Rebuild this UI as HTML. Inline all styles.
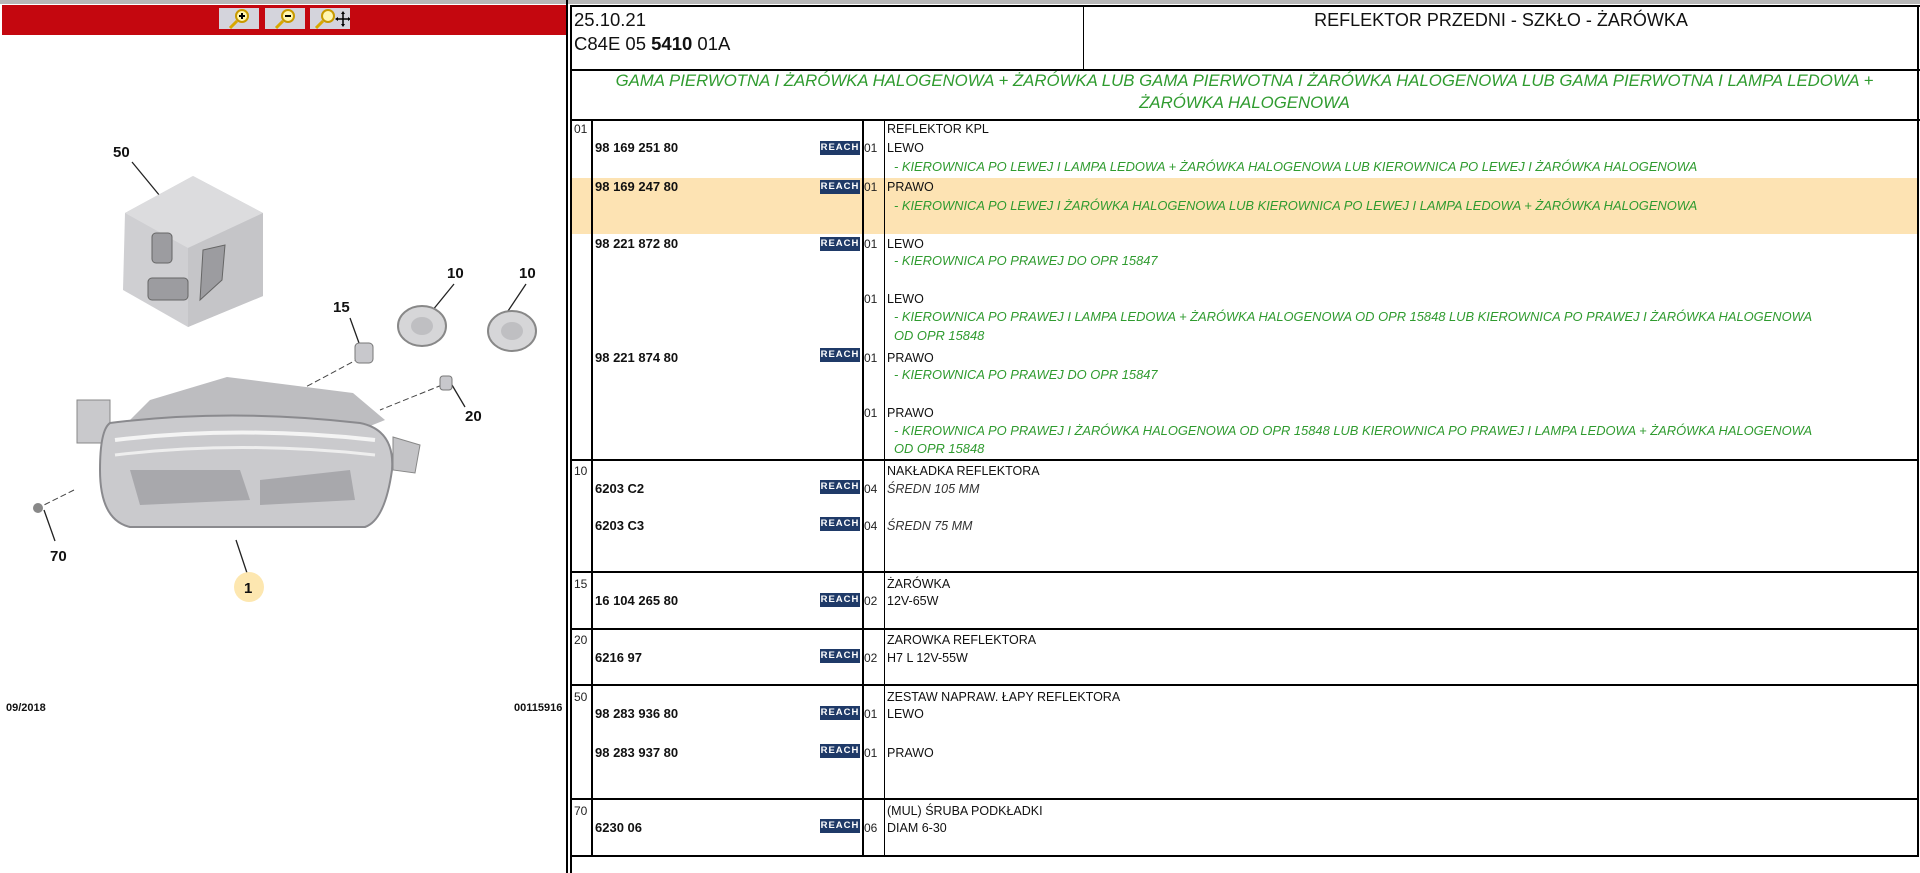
<!DOCTYPE html>
<html><head><meta charset="utf-8">
<style>
*{margin:0;padding:0;box-sizing:border-box}
body{width:1920px;height:873px;background:#fff;position:relative;overflow:hidden;font-family:"Liberation Sans",Arial,sans-serif;color:#111}
.a{position:absolute;white-space:nowrap;line-height:16px}
.p{font-size:13px;font-weight:bold;left:595px}
.q{font-size:12px;left:864px;color:#222}
.d{font-size:12.5px;left:887px}
.g{font-size:12.9px;left:894px;font-style:italic;color:#2f9b2f}
.n{font-size:12px;left:574px;color:#222}
.r{position:absolute;left:820px;width:40px;height:14px;background:#1f3a68;color:#fff;font-size:9.5px;font-weight:bold;letter-spacing:1px;line-height:14px;text-align:center}
.h{position:absolute;background:#000}
.btn{position:absolute;top:8px;width:40px;height:21px;background:#d4d4dc}
</style></head><body>
<div class="h" style="left:0;top:0;width:1920px;height:4px;background:#b8b8b8"></div>
<div class="h" style="left:2px;top:5px;width:564px;height:30px;background:#c4070f"></div>
<div class="btn" style="left:219px"><svg width="40" height="21"><circle cx="23" cy="8" r="6" fill="#fff6b0" stroke="#c89a00" stroke-width="2"/><line x1="18" y1="13" x2="11" y2="20" stroke="#d8a800" stroke-width="3"/><path d="M20 8h6M23 5v6" stroke="#000" stroke-width="2"/></svg></div>
<div class="btn" style="left:265px"><svg width="40" height="21"><circle cx="23" cy="8" r="6" fill="#fff6b0" stroke="#c89a00" stroke-width="2"/><line x1="18" y1="13" x2="11" y2="20" stroke="#d8a800" stroke-width="3"/><path d="M20 8h6" stroke="#000" stroke-width="2"/></svg></div>
<div class="btn" style="left:310px"><svg width="40" height="21"><circle cx="18" cy="8" r="6" fill="#fff6b0" stroke="#c89a00" stroke-width="2"/><line x1="13" y1="13" x2="6" y2="20" stroke="#d8a800" stroke-width="3"/><path d="M33 5v12M27 11h12" stroke="#000" stroke-width="1.5"/><path d="M31 6l2-3 2 3zM31 16l2 3 2-3zM28 9l-3 2 3 2zM38 9l3 2-3 2z" fill="#000"/></svg></div>

<svg style="position:absolute;left:0;top:36px" width="566" height="600" viewBox="0 36 566 600">
<g font-family="Liberation Sans" font-weight="bold" font-size="15" fill="#111">
<text x="113" y="157">50</text><text x="447" y="278">10</text><text x="519" y="278">10</text>
<text x="333" y="312">15</text><text x="465" y="421">20</text><text x="50" y="561">70</text></g>
<g stroke="#222" stroke-width="1.3"><line x1="132" y1="162" x2="160" y2="196"/><line x1="454" y1="284" x2="432" y2="311"/><line x1="526" y1="284" x2="508" y2="311"/><line x1="350" y1="318" x2="359" y2="343"/><line x1="465" y1="407" x2="452" y2="385"/><line x1="44" y1="510" x2="55" y2="541"/><line x1="236" y1="540" x2="247" y2="573"/></g>
<polygon points="193,176 263,213 263,296 188,327 123,290 125,213" fill="#cfcfd2"/>
<polygon points="193,176 263,213 188,248 125,213" fill="#dcdcde"/>
<polygon points="188,248 263,213 263,296 188,327" fill="#c5c5c8"/>
<g fill="#9c9ca0" stroke="#666"><rect x="152" y="233" width="20" height="30" rx="4"/><rect x="148" y="278" width="40" height="22" rx="4"/><polygon points="203,250 225,245 222,280 200,300"/></g>
<g fill="#d6d6d8" stroke="#888" stroke-width="2"><ellipse cx="422" cy="326" rx="24" ry="20"/><ellipse cx="512" cy="331" rx="24" ry="20"/></g>
<g fill="#bfbfc2"><ellipse cx="422" cy="326" rx="11" ry="9"/><ellipse cx="512" cy="331" rx="11" ry="9"/></g>
<g stroke="#444" stroke-dasharray="6 3"><line x1="360" y1="358" x2="300" y2="390"/><line x1="442" y1="385" x2="380" y2="410"/><line x1="74" y1="490" x2="42" y2="506"/></g>
<rect x="355" y="343" width="18" height="20" rx="4" fill="#c8c8cc" stroke="#777"/>
<rect x="440" y="376" width="12" height="14" rx="3" fill="#c8c8cc" stroke="#777"/>
<circle cx="38" cy="508" r="5" fill="#888"/>
<polygon points="150,400 227,377 353,393 385,420 360,430 120,430" fill="#bdbdc0"/>
<polygon points="77,400 110,400 110,443 77,443" fill="#c9c9cc" stroke="#888"/>
<polygon points="393,437 420,445 415,473 393,470" fill="#c4c4c7" stroke="#888"/>
<path d="M110 423 Q230 408 360 423 Q395 430 392 470 Q385 520 365 527 L130 527 Q100 520 100 470 Q100 430 110 423Z" fill="#cacacd" stroke="#8a8a8e" stroke-width="2"/>
<path d="M115 440 Q240 425 375 440" stroke="#f4f4f4" stroke-width="4" fill="none"/>
<path d="M115 455 Q240 440 375 455" stroke="#eee" stroke-width="3" fill="none"/>
<path d="M130 470 L240 470 L250 500 L140 505Z" fill="#a8a8ac"/><path d="M260 480 L350 470 L355 500 L260 505Z" fill="#a8a8ac"/>
<circle cx="249" cy="587" r="15" fill="#fde7b0"/><text x="244" y="593" font-family="Liberation Sans" font-weight="bold" font-size="15" fill="#111">1</text>
</svg>
<div class="a" style="left:6px;top:700px;font-size:11px;font-weight:bold">09/2018</div>
<div class="a" style="left:514px;top:700px;font-size:11px;font-weight:bold">00115916</div>

<div class="h" style="left:566px;top:0;width:2px;height:873px"></div>
<div class="h" style="left:570px;top:5px;width:2px;height:868px"></div>
<div class="h" style="left:570px;top:5px;width:1350px;height:2px"></div>
<div class="h" style="left:1917px;top:5px;width:2px;height:851px"></div>
<div class="h" style="left:1083px;top:5px;width:1px;height:65px"></div>
<div class="h" style="left:570px;top:69px;width:1350px;height:2px"></div>
<div class="h" style="left:570px;top:119px;width:1350px;height:2px"></div>
<div class="a" style="left:574px;top:10px;font-size:18.5px;line-height:20px">25.10.21</div>
<div class="a" style="left:574px;top:34px;font-size:18.5px;line-height:20px">C84E 05 <b>5410</b> 01A</div>
<div class="a" style="left:1084px;width:834px;text-align:center;top:10px;font-size:18px;line-height:20px">REFLEKTOR PRZEDNI - SZKŁO - ŻARÓWKA</div>
<div class="a" style="left:572px;width:1345px;text-align:center;top:70px;font-size:16.8px;line-height:22px;font-style:italic;color:#2f9b2f;white-space:normal">GAMA PIERWOTNA I ŻARÓWKA HALOGENOWA + ŻARÓWKA LUB GAMA PIERWOTNA I ŻARÓWKA HALOGENOWA LUB GAMA PIERWOTNA I LAMPA LEDOWA +<br>ŻARÓWKA HALOGENOWA</div>

<div class="h" style="left:572px;top:178px;width:1345px;height:56px;background:#fde3b3"></div>
<div class="h" style="left:591px;top:121px;width:2px;height:735px"></div>
<div class="h" style="left:862px;top:121px;width:2px;height:735px"></div>
<div class="h" style="left:884px;top:121px;width:1px;height:735px"></div>
<div class="h" style="left:572px;top:459px;width:1345px;height:2px"></div>
<div class="h" style="left:572px;top:571px;width:1345px;height:2px"></div>
<div class="h" style="left:572px;top:628px;width:1345px;height:2px"></div>
<div class="h" style="left:572px;top:684px;width:1345px;height:2px"></div>
<div class="h" style="left:572px;top:798px;width:1345px;height:2px"></div>
<div class="h" style="left:572px;top:855px;width:1347px;height:2px"></div>

<div class="a n" style="top:121px">01</div>
<div class="a d" style="top:121px">REFLEKTOR KPL</div>
<div class="a p" style="top:140px">98 169 251 80</div><div class="r" style="top:141px">REACH</div><div class="a q" style="top:140px">01</div><div class="a d" style="top:140px">LEWO</div>
<div class="a g" style="top:159px">- KIEROWNICA PO LEWEJ I LAMPA LEDOWA + ŻARÓWKA HALOGENOWA LUB KIEROWNICA PO LEWEJ I ŻARÓWKA HALOGENOWA</div>
<div class="a p" style="top:179px">98 169 247 80</div><div class="r" style="top:180px">REACH</div><div class="a q" style="top:179px">01</div><div class="a d" style="top:179px">PRAWO</div>
<div class="a g" style="top:198px">- KIEROWNICA PO LEWEJ I ŻARÓWKA HALOGENOWA LUB KIEROWNICA PO LEWEJ I LAMPA LEDOWA + ŻARÓWKA HALOGENOWA</div>
<div class="a p" style="top:236px">98 221 872 80</div><div class="r" style="top:237px">REACH</div><div class="a q" style="top:236px">01</div><div class="a d" style="top:236px">LEWO</div>
<div class="a g" style="top:253px">- KIEROWNICA PO PRAWEJ DO OPR 15847</div>
<div class="a q" style="top:291px">01</div><div class="a d" style="top:291px">LEWO</div>
<div class="a g" style="top:309px">- KIEROWNICA PO PRAWEJ I LAMPA LEDOWA + ŻARÓWKA HALOGENOWA OD OPR 15848 LUB KIEROWNICA PO PRAWEJ I ŻARÓWKA HALOGENOWA</div>
<div class="a g" style="top:328px">OD OPR 15848</div>
<div class="a p" style="top:350px">98 221 874 80</div><div class="r" style="top:348px">REACH</div><div class="a q" style="top:350px">01</div><div class="a d" style="top:350px">PRAWO</div>
<div class="a g" style="top:367px">- KIEROWNICA PO PRAWEJ DO OPR 15847</div>
<div class="a q" style="top:405px">01</div><div class="a d" style="top:405px">PRAWO</div>
<div class="a g" style="top:423px">- KIEROWNICA PO PRAWEJ I ŻARÓWKA HALOGENOWA OD OPR 15848 LUB KIEROWNICA PO PRAWEJ I LAMPA LEDOWA + ŻARÓWKA HALOGENOWA</div>
<div class="a g" style="top:441px">OD OPR 15848</div>

<div class="a n" style="top:463px">10</div><div class="a d" style="top:463px">NAKŁADKA REFLEKTORA</div>
<div class="a p" style="top:481px">6203 C2</div><div class="r" style="top:480px">REACH</div><div class="a q" style="top:481px">04</div><div class="a d" style="top:481px;font-style:italic;color:#333">ŚREDN 105 MM</div>
<div class="a p" style="top:518px">6203 C3</div><div class="r" style="top:517px">REACH</div><div class="a q" style="top:518px">04</div><div class="a d" style="top:518px;font-style:italic;color:#333">ŚREDN 75 MM</div>

<div class="a n" style="top:576px">15</div><div class="a d" style="top:576px">ŻARÓWKA</div>
<div class="a p" style="top:593px">16 104 265 80</div><div class="r" style="top:593px">REACH</div><div class="a q" style="top:593px">02</div><div class="a d" style="top:593px">12V-65W</div>

<div class="a n" style="top:632px">20</div><div class="a d" style="top:632px">ZAROWKA REFLEKTORA</div>
<div class="a p" style="top:650px">6216 97</div><div class="r" style="top:649px">REACH</div><div class="a q" style="top:650px">02</div><div class="a d" style="top:650px">H7 L 12V-55W</div>

<div class="a n" style="top:689px">50</div><div class="a d" style="top:689px">ZESTAW NAPRAW. ŁAPY REFLEKTORA</div>
<div class="a p" style="top:706px">98 283 936 80</div><div class="r" style="top:706px">REACH</div><div class="a q" style="top:706px">01</div><div class="a d" style="top:706px">LEWO</div>
<div class="a p" style="top:745px">98 283 937 80</div><div class="r" style="top:744px">REACH</div><div class="a q" style="top:745px">01</div><div class="a d" style="top:745px">PRAWO</div>

<div class="a n" style="top:803px">70</div><div class="a d" style="top:803px">(MUL) ŚRUBA PODKŁADKI</div>
<div class="a p" style="top:820px">6230 06</div><div class="r" style="top:819px">REACH</div><div class="a q" style="top:820px">06</div><div class="a d" style="top:820px">DIAM 6-30</div>
</body></html>
